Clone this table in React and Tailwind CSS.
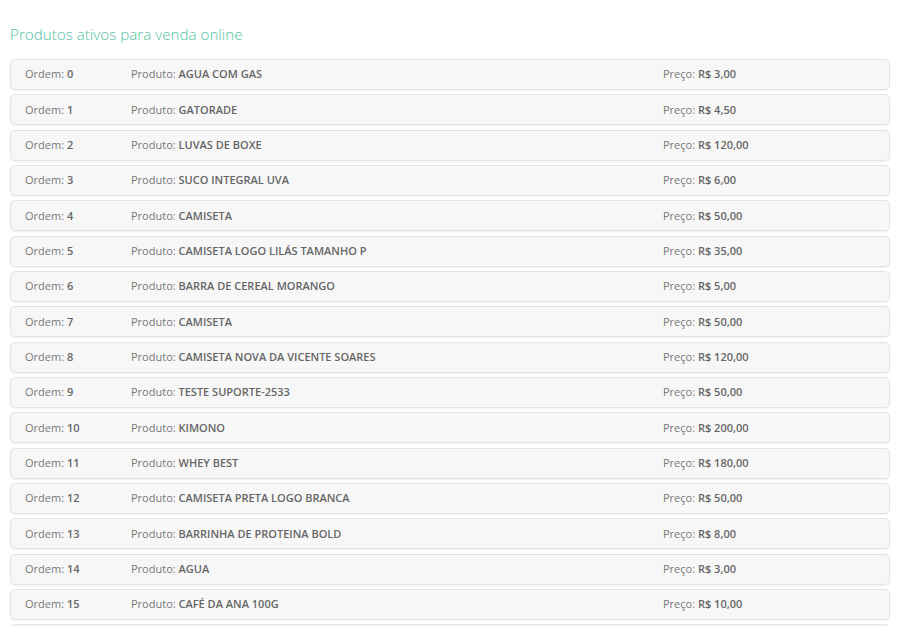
const produtos = [
  { nome: "AGUA COM GAS", preco: "R$ 3,00" },
  { nome: "GATORADE", preco: "R$ 4,50" },
  { nome: "LUVAS DE BOXE", preco: "R$ 120,00" },
  { nome: "SUCO INTEGRAL UVA", preco: "R$ 6,00" },
  { nome: "CAMISETA", preco: "R$ 50,00" },
  { nome: "CAMISETA LOGO LILÁS TAMANHO P", preco: "R$ 35,00" },
  { nome: "BARRA DE CEREAL MORANGO", preco: "R$ 5,00" },
  { nome: "CAMISETA", preco: "R$ 50,00" },
  { nome: "CAMISETA NOVA DA VICENTE SOARES", preco: "R$ 120,00" },
  { nome: "TESTE SUPORTE-2533", preco: "R$ 50,00" },
  { nome: "KIMONO", preco: "R$ 200,00" },
  { nome: "WHEY BEST", preco: "R$ 180,00" },
  { nome: "CAMISETA PRETA LOGO BRANCA", preco: "R$ 50,00" },
  { nome: "BARRINHA DE PROTEINA BOLD", preco: "R$ 8,00" },
  { nome: "AGUA", preco: "R$ 3,00" },
  { nome: "CAFÉ DA ANA 100G", preco: "R$ 10,00" },
];

export default function App() {
  return (
    <div className="h-[627px] overflow-hidden bg-white px-[10px] pt-[24px] font-['Open_Sans',sans-serif] text-[11px] text-[#777]">
      <h2 className="mb-[15px] text-[15.2px] font-light leading-[20px] text-[#4fbf9f]">
        Produtos ativos para venda online
      </h2>
      <div className="flex w-[880px] flex-col gap-[4.33px]">
        {produtos.map((p, i) => (
          <div
            key={i}
            className="flex h-[31px] shrink-0 items-center rounded-[5px] border border-[#e3e3e3] bg-[#f7f7f7] pl-[14px] shadow-[0_1px_1px_rgba(0,0,0,0.05)]"
          >
            <div className="w-[106px]">
              Ordem: <b className="font-semibold text-[#666]">{i}</b>
            </div>
            <div className="w-[532px]">
              Produto: <b className="font-semibold text-[#666]">{p.nome}</b>
            </div>
            <div>
              Preço: <b className="font-semibold text-[#666]">{p.preco}</b>
            </div>
          </div>
        ))}
        <div className="h-[31px] shrink-0 rounded-[5px] border border-[#e3e3e3] bg-[#f7f7f7]" />
      </div>
    </div>
  );
}
